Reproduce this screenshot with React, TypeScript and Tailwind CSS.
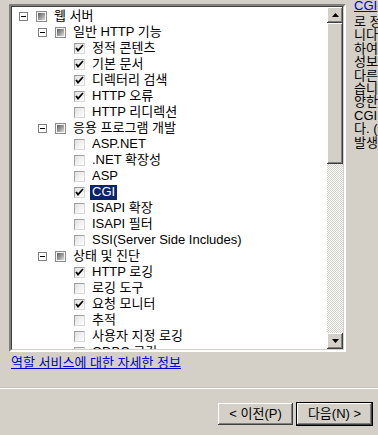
import type { ReactNode } from "react";

type Row = {
  label: string;
  level: number;
  kind: "group" | "on" | "off";
  selected?: boolean;
};

const ROWS: Row[] = [
  { label: "웹 서버", level: 0, kind: "group" },
  { label: "일반 HTTP 기능", level: 1, kind: "group" },
  { label: "정적 콘텐츠", level: 2, kind: "on" },
  { label: "기본 문서", level: 2, kind: "on" },
  { label: "디렉터리 검색", level: 2, kind: "on" },
  { label: "HTTP 오류", level: 2, kind: "on" },
  { label: "HTTP 리디렉션", level: 2, kind: "off" },
  { label: "응용 프로그램 개발", level: 1, kind: "group" },
  { label: "ASP.NET", level: 2, kind: "off" },
  { label: ".NET 확장성", level: 2, kind: "off" },
  { label: "ASP", level: 2, kind: "off" },
  { label: "CGI", level: 2, kind: "on", selected: true },
  { label: "ISAPI 확장", level: 2, kind: "off" },
  { label: "ISAPI 필터", level: 2, kind: "off" },
  { label: "SSI(Server Side Includes)", level: 2, kind: "off" },
  { label: "상태 및 진단", level: 1, kind: "group" },
  { label: "HTTP 로깅", level: 2, kind: "on" },
  { label: "로깅 도구", level: 2, kind: "off" },
  { label: "요청 모니터", level: 2, kind: "on" },
  { label: "추적", level: 2, kind: "off" },
  { label: "사용자 지정 로깅", level: 2, kind: "off" },
  { label: "ODBC 로깅", level: 2, kind: "off" },
];

const INFO_LINES = [
  "로 정의된 외부 프로그램과 통신하는 방법을 정의합",
  "니다. 웹 서버는 CGI를 사용하여 요청에 대한 정보를",
  "하여 외부 프로그램에 전달하고 응답을 생성합니다",
  "성보 없이 동적으로 콘텐츠를 생성할 수 있습니다",
  "다른 언어로 작성된 프로그램을 사용할 수 있",
  "습니다. 웹 서버에서 CGI를 사용하면 다",
  "양한 스크립트 언어를 사용할 수 있습니다",
  "CGI 프로그램은 요청마다 새 프로세스를 생성합니",
  "다. (CGI 요청이 많으면 성능 저하가",
  "발생할 수 있습니다.)",
];

const raised =
  "bg-[#d4d0c8] shadow-[inset_-1px_-1px_#404040,inset_1px_1px_#ffffff,inset_-2px_-2px_#808080,inset_2px_2px_#d4d0c8]";

function Expander() {
  return (
    <span className="flex h-[9px] w-[9px] shrink-0 items-center justify-center border border-[#808080] bg-white">
      <span className="h-px w-[5px] bg-black" />
    </span>
  );
}

function Check() {
  return (
    <svg width="9" height="9" viewBox="0 0 9 9" className="block">
      <path d="M1 4 L3 6.5 L8 1" fill="none" stroke="#000" strokeWidth="1.8" />
    </svg>
  );
}

function Box({ kind }: { kind: Row["kind"] }) {
  if (kind === "group") {
    return (
      <span className="flex h-[11px] w-[11px] shrink-0 items-center justify-center border border-[#8c8c8c] bg-[#f4f4f4]">
        <span className="h-[7px] w-[7px] bg-gradient-to-br from-[#5a5a5a] to-[#dcdcdc]" />
      </span>
    );
  }
  return (
    <span className="flex h-[11px] w-[11px] shrink-0 items-center justify-center border border-t-[#a0a0a0] border-l-[#a0a0a0] border-r-[#d8d8d8] border-b-[#d8d8d8] bg-gradient-to-br from-[#e2e2e2] to-white">
      {kind === "on" && <Check />}
    </span>
  );
}

function TreeRow({ row }: { row: Row }) {
  return (
    <div
      className="flex h-[16px] shrink-0 items-center whitespace-nowrap"
      style={{ paddingLeft: 7 + row.level * 19 }}
    >
      <span className="flex w-[9px] shrink-0">{row.kind === "group" && <Expander />}</span>
      <span className="ml-[8px]">
        <Box kind={row.kind} />
      </span>
      <span
        className={`ml-[5px] flex h-[15px] items-center px-[2px] ${
          row.selected ? "bg-[#0a246a] text-white" : "text-black"
        }`}
      >
        {row.label}
      </span>
    </div>
  );
}

function ArrowButton({ up }: { up?: boolean }) {
  return (
    <div className={`flex h-[16px] w-[16px] shrink-0 items-center justify-center ${raised}`}>
      <svg width="7" height="4" viewBox="0 0 7 4" className="block">
        <path d={up ? "M3.5 0 L7 4 L0 4 Z" : "M0 0 L7 0 L3.5 4 Z"} fill="#000" />
      </svg>
    </div>
  );
}

function Scrollbar() {
  return (
    <div className="flex w-[16px] shrink-0 flex-col">
      <ArrowButton up />
      <div className={`h-[141px] shrink-0 ${raised}`} />
      <div className="flex-1 [background:repeating-conic-gradient(#d4d0c8_0%_25%,#ffffff_0%_50%)_0_0/2px_2px]" />
      <ArrowButton />
    </div>
  );
}

function Button({ children, primary }: { children: ReactNode; primary?: boolean }) {
  return (
    <div
      className={`flex h-[22px] w-[75px] items-center justify-center ${raised} ${
        primary ? "outline outline-1 outline-black" : ""
      }`}
    >
      {children}
    </div>
  );
}

export default function App() {
  return (
    <div
      className="flex h-[435px] w-[378px] flex-col overflow-hidden bg-[#d4d0c8] text-[13px] text-black"
      style={{ fontFamily: '"Liberation Sans", "Noto Sans CJK KR", sans-serif' }}
    >
      <div className="flex shrink-0 gap-[8px] pl-[9px] pt-[4px]">
        <div className="flex h-[348px] w-[337px] shrink-0 border-2 border-t-[#808080] border-l-[#808080] border-r-white border-b-white">
          <div className="flex flex-1 border border-t-[#404040] border-l-[#404040] border-r-[#d4d0c8] border-b-[#d4d0c8] bg-white">
            <div className="flex flex-1 flex-col overflow-hidden pt-px">
              {ROWS.map((row) => (
                <TreeRow key={row.label} row={row} />
              ))}
            </div>
            <Scrollbar />
          </div>
        </div>
        <div className="-mt-[6px] w-[220px] shrink-0 whitespace-nowrap">
          <div className="h-[17px] leading-[15px]">
            <span className="text-[#0000cc] underline">CGI</span>는 CGI(Common Gateway Interface)
          </div>
          {INFO_LINES.map((line) => (
            <div key={line} className="leading-[13.4px]">
              {line}
            </div>
          ))}
        </div>
      </div>

      <div className="mt-[3px] pl-[11px] leading-[16px]">
        <span className="text-[#0000cc] underline">역할 서비스에 대한 자세한 정보</span>
      </div>

      <div className="mt-[16px] h-[2px] shrink-0 border-t border-t-[#c4c0b8] border-b border-b-white" />

      <div className="mt-[14px] flex justify-end gap-[4px] pr-[6px]">
        <Button>&lt; 이전(P)</Button>
        <Button primary>다음(N) &gt;</Button>
      </div>
    </div>
  );
}
